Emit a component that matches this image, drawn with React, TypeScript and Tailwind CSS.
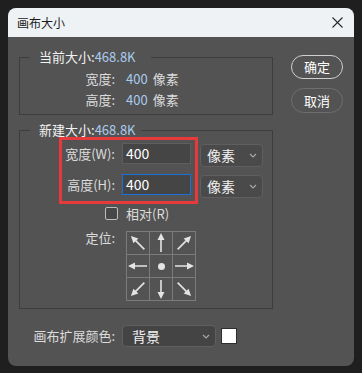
function Chevron() {
  return (
    <svg width="8" height="5" viewBox="0 0 8 5" fill="none" stroke="#a6a6a6" strokeWidth="1.2">
      <path d="M1 1l3 3 3-3" />
    </svg>
  )
}

function Arrow({ angle }: { angle: number }) {
  return (
    <svg width="22" height="22" viewBox="0 0 22 22">
      <g transform={`rotate(${angle} 11 11)`} fill="#e4e4e4" stroke="#e4e4e4">
        <line x1="2" y1="11" x2="15" y2="11" strokeWidth="1.6" />
        <polygon points="21,11 14,7.5 14,14.5" stroke="none" />
      </g>
    </svg>
  )
}

// anchor grid: null = centre dot
const anchors: (number | null)[] = [-135, -90, -45, 180, null, 0, 135, 90, 45]

function UnitSelect() {
  return (
    <div className="flex h-[23px] w-[63px] items-center justify-between rounded-[4px] border border-[#5f5f5f] bg-[#4a4a4a] pl-[6px] pr-[5px] text-[14px] text-[#f2f2f2]">
      <span>像素</span>
      <Chevron />
    </div>
  )
}

export default function App() {
  return (
    <div className="h-[373px] w-[362px] bg-[#1f1f1f] p-2 font-['Noto_Sans_CJK_SC',sans-serif] text-[13px] text-[#dcdcdc]">
      <div className="flex h-[358px] w-[346px] flex-col overflow-hidden rounded-lg bg-[#535353]">
        <div className="flex h-[29px] items-center justify-between bg-[#eef2f4] pl-[9px] pr-[11px]">
          <span className="text-[12px] text-[#1b1b1b]">画布大小</span>
          <svg width="11" height="11" viewBox="0 0 11 11" stroke="#2a2a2a" strokeWidth="1.1">
            <path d="M0.5 0.5l10 10M10.5 0.5l-10 10" />
          </svg>
        </div>

        <div className="flex">
          <div className="ml-[11px] mt-[13px] w-[254px]">
            <fieldset className="border border-[#3d3d3d] pb-[4px]">
              <legend className="ml-[10px] pl-[9px] pr-[15px] leading-[14px] text-[#f2f2f2]">
                当前大小:<span className="text-[#a9cbee]">468.8K</span>
              </legend>
              <div className="mt-[4px] flex h-[21px] items-center">
                <span className="w-[95px] text-right">宽度:</span>
                <span className="ml-[11px] text-[#a9cbee]">400</span>
                <span className="ml-[5px]">像素</span>
              </div>
              <div className="flex h-[21px] items-center">
                <span className="w-[95px] text-right">高度:</span>
                <span className="ml-[11px] text-[#a9cbee]">400</span>
                <span className="ml-[5px]">像素</span>
              </div>
            </fieldset>

            <fieldset className="mt-[8px] border border-[#3d3d3d] pb-[7px]">
              <legend className="ml-[10px] pl-[9px] pr-[5px] leading-[14px] text-[#f2f2f2]">
                新建大小:<span className="text-[#a9cbee]">468.8K</span>
              </legend>
              <div className="ml-[39px] flex items-start">
                <div className="flex flex-col gap-[10px] border-[3px] border-[#e8393c] pb-[6px] pr-[4px] pt-[3px]">
                  <div className="flex h-[21px] items-center">
                    <span className="w-[53px] text-right">宽度(W):</span>
                    <div className="ml-[7px] flex h-[21px] w-[69px] items-center border border-[#5e5e5e] bg-[#454545] pl-[3px] text-[14px] text-white">
                      400
                    </div>
                  </div>
                  <div className="flex h-[21px] items-center">
                    <span className="w-[53px] text-right">高度(H):</span>
                    <div className="ml-[7px] flex h-[21px] w-[69px] items-center border border-[#1a6fd8] bg-[#454545] pl-[3px] text-[14px] text-white">
                      400
                    </div>
                  </div>
                </div>
                <div className="ml-[2px] flex flex-col gap-[8px] pt-[7px]">
                  <UnitSelect />
                  <UnitSelect />
                </div>
              </div>

              <div className="ml-[85px] mt-[3px] flex h-[13px] items-center">
                <div className="h-[13px] w-[13px] rounded-[2px] border border-[#bdbdbd] bg-[#474747]" />
                <span className="ml-[8px]">相对(R)</span>
              </div>

              <div className="mt-[11px] flex items-start">
                <span className="w-[95px] text-right leading-[14px]">定位:</span>
                <div className="ml-[11px] grid grid-cols-3 gap-px bg-[#7b7b7b] p-px">
                  {anchors.map((a, i) => (
                    <div key={i} className="flex h-[22px] w-[22px] items-center justify-center bg-[#535353]">
                      {a === null ? <div className="h-[7px] w-[7px] rounded-full bg-[#e4e4e4]" /> : <Arrow angle={a} />}
                    </div>
                  ))}
                </div>
              </div>
            </fieldset>

            <div className="mt-[16px] flex items-center">
              <span className="w-[96px] text-right">画布扩展颜色:</span>
              <div className="ml-[7px] flex h-[22px] w-[94px] items-center justify-between rounded-[4px] border border-[#5f5f5f] bg-[#444444] pl-[9px] pr-[5px] text-[14px] text-[#f2f2f2]">
                <span>背景</span>
                <Chevron />
              </div>
              <div className="ml-[5px] h-[16px] w-[16px] border border-[#2e2e2e] bg-white" />
            </div>
          </div>

          <div className="ml-[18px] mt-[18px] flex w-[52px] flex-col gap-[9px]">
            <button className="flex h-[24px] items-center justify-center rounded-full border-[1.5px] border-[#cfcfcf] text-[13px] text-white">
              确定
            </button>
            <button className="flex h-[25px] items-center justify-center rounded-full border-[1.5px] border-[#6e6e6e] text-[13px] text-white">
              取消
            </button>
          </div>
        </div>
      </div>
    </div>
  )
}
